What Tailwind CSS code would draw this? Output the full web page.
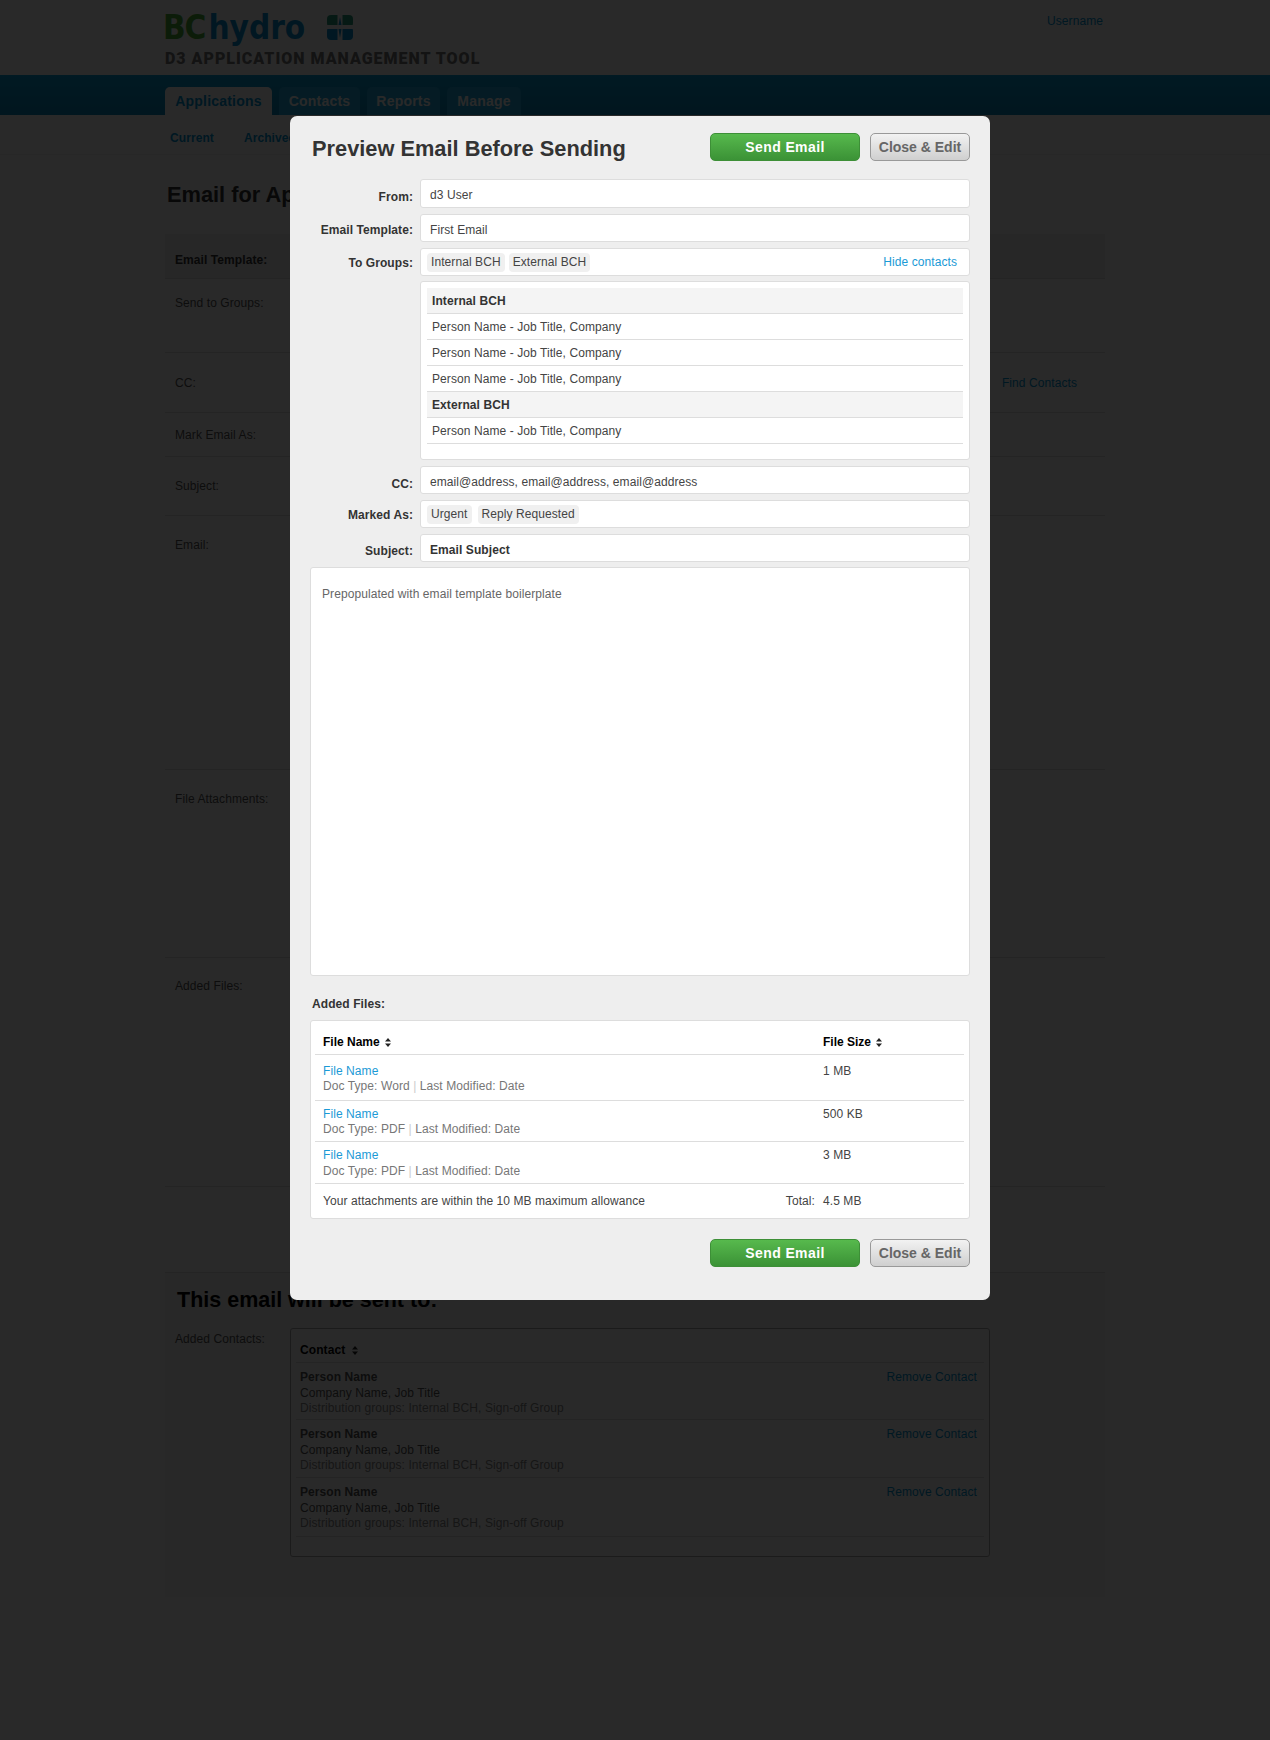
<!DOCTYPE html>
<html lang="en">
<head>
    <meta charset="UTF-8">
    <title>Preview Email Before Sending</title>
    <script src="https://cdn.jsdelivr.net/npm/@tailwindcss/browser@4"></script>
</head>
<body class="bg-white font-['Liberation_Sans',Arial,sans-serif] text-[12px] tracking-[0.08px] text-[#444]">
<div class="relative w-[1270px] h-[1740px] overflow-hidden bg-white">

    <!-- page under the dialog -->
    <header class="h-[75px] bg-[#fff]">
        <div class="w-[940px] mx-auto flex justify-between relative">
            <div>
                <div class="flex items-center h-[46px] pt-[8px] -ml-[2px]">
                    <span class="font-['DejaVu_Sans',sans-serif] font-stretch-condensed font-bold text-[33px] leading-none tracking-[-1px] text-[#4caf3a]">BC</span>
                    <span class="ml-[3px] font-['DejaVu_Sans',sans-serif] font-stretch-condensed font-bold text-[33px] leading-none tracking-normal text-[#0a8fd0]">hydro</span>
                    <svg class="ml-[22px]" width="26" height="25" viewBox="0 0 26 25"><rect width="26" height="12" rx="4" fill="#2a9a7a"/><rect y="12" width="26" height="13" rx="4" fill="#0a8fd0"/><path d="M10.500 0h5v10H26v4H15.500v11h-5V14H0v-4h10.500z" fill="#fff"/><path d="M13 2l-1.500 8h3zM13 23l-1.500-9h3z" fill="#0a8fd0"/></svg>
                </div>
                <div class="mt-[3px] font-['Roboto',sans-serif] font-black text-[16px] leading-[20px] tracking-[1px] text-[#777]">D3 APPLICATION MANAGEMENT TOOL</div>
            </div>
            <a class="pt-[12px] pr-[2px] text-[#0095d5]">Username</a>
        </div>
    </header>
    <nav class="h-[40px] bg-gradient-to-b from-[#0b9fd8] to-[#0a88bc]">
        <div class="w-[940px] mx-auto flex gap-[7px] pt-[12px] h-full font-bold text-[14px] tracking-[0.2px]">
            <a class="flex items-center w-[107px] justify-center rounded-t-[5px] bg-white text-[#0095d5]">Applications</a>
            <a class="flex items-center w-[81px] justify-center rounded-t-[5px] bg-[#1fa8dc] text-white">Contacts</a>
            <a class="flex items-center w-[73px] justify-center rounded-t-[5px] bg-[#1fa8dc] text-white">Reports</a>
            <a class="flex items-center w-[74px] justify-center rounded-t-[5px] bg-[#1fa8dc] text-white">Manage</a>
        </div>
    </nav>
    <div class="h-[40px] border-b border-[#eee]">
        <div class="w-[940px] mx-auto flex gap-[30px] pl-[5px] pt-[14px] font-bold text-[#0095d5]">
            <a>Current</a>
            <a>Archived</a>
        </div>
    </div>

    <main class="w-[940px] mx-auto text-[#555]">
        <h1 class="pt-[27px] pl-[2px] h-[79px] font-bold text-[21.800px] tracking-normal leading-[26px] text-[#333]">Email for Application</h1>
        <div class="h-[45px] pl-[10px] pt-[17px] font-bold text-[#333] bg-[#f2f2f2] border-b border-[#ddd]">Email Template:</div>
        <div class="h-[74px] pl-[10px] pt-[15px] border-b border-[#ddd]">Send to Groups:</div>
        <div class="h-[60px] pl-[10px] pt-[21px] border-b border-[#ddd] flex justify-between"><span>CC:</span><a class="mr-[28px] text-[#0095d5]">Find Contacts</a></div>
        <div class="h-[44px] pl-[10px] pt-[13px] border-b border-[#ddd]">Mark Email As:</div>
        <div class="h-[59px] pl-[10px] pt-[20px] border-b border-[#ddd]">Subject:</div>
        <div class="h-[254px] pl-[10px] pt-[20px] border-b border-[#ddd]">Email:</div>
        <div class="h-[188px] pl-[10px] pt-[20px] border-b border-[#ddd]">File Attachments:</div>
        <div class="h-[229px] pl-[10px] pt-[19px] border-b border-[#ddd]">Added Files:</div>

        <section class="mt-[85px] h-[325px] bg-[#f6f6f6] border-t border-[#ddd] relative">
            <h2 class="pt-[14px] pl-[12px] font-bold text-[21.500px] tracking-normal leading-[26px] text-black">This email will be sent to:</h2>
            <div class="flex mt-[15px]">
                <div class="w-[125px] pl-[10px] pt-[2px]">Added Contacts:</div>
                <div class="w-[700px] h-[229px] bg-white border border-[#aaa] rounded-[3px] px-[5px]">
                    <div class="h-[34px] pl-[4px] pt-[12px] border-b border-[#ddd] font-bold text-black">Contact <svg class="inline ml-[3px]" width="6" height="9" viewBox="0 0 6 9"><path d="M3 0l3 3.500H0zM3 9L0 5.500h6z" fill="#222"/></svg></div>
                    <div class="h-[57px] pl-[4px] pt-[7px] leading-[15.500px] border-b border-[#ddd] flex justify-between">
                        <div><b class="block">Person Name</b><span class="block">Company Name, Job Title</span><span class="block text-[#888]">Distribution groups: Internal BCH, Sign-off Group</span></div>
                        <a class="mr-[7px] text-[#0095d5]">Remove Contact</a>
                    </div>
                    <div class="h-[58px] pl-[4px] pt-[7px] leading-[15.500px] border-b border-[#ddd] flex justify-between">
                        <div><b class="block">Person Name</b><span class="block">Company Name, Job Title</span><span class="block text-[#888]">Distribution groups: Internal BCH, Sign-off Group</span></div>
                        <a class="mr-[7px] text-[#0095d5]">Remove Contact</a>
                    </div>
                    <div class="h-[59px] pl-[4px] pt-[7px] leading-[15.500px] border-b border-[#ddd] flex justify-between">
                        <div><b class="block">Person Name</b><span class="block">Company Name, Job Title</span><span class="block text-[#888]">Distribution groups: Internal BCH, Sign-off Group</span></div>
                        <a class="mr-[7px] text-[#0095d5]">Remove Contact</a>
                    </div>
                </div>
            </div>
        </section>
    </main>

    <!-- overlay + dialog -->
    <div class="absolute inset-0 bg-black/84"></div>
    <div class="absolute left-[290px] top-[116px] w-[700px] h-[1184px] rounded-[7px] bg-[#eee] px-[20px]">
        <div class="flex items-start h-[63px]">
            <h2 class="pl-[2px] pt-[20px] font-bold text-[21.800px] tracking-normal leading-[26px] text-[#333]">Preview Email Before Sending</h2>
            <button class="ml-auto mt-[17px] w-[150px] h-[28px] rounded-[5px] border border-[#3d8f37] bg-gradient-to-b from-[#57b94d] to-[#3b9236] font-bold text-[14px] tracking-[0.4px] text-white">Send Email</button>
            <button class="ml-[10px] mt-[17px] w-[100px] h-[28px] rounded-[5px] border border-[#999] bg-gradient-to-b from-[#f2f2f2] to-[#cfcfcf] font-bold text-[14px] tracking-normal text-[#666]">Close &amp; Edit</button>
        </div>

        <div class="flex flex-col gap-[6px]">
            <div class="flex">
                <div class="w-[110px] pr-[7px] pt-[9px] text-right font-bold text-[#333]">From:</div>
                <div class="w-[550px] h-[29px] flex items-center pl-[9px] pt-[3px] rounded-[3px] bg-white border border-[#ddd]">d3 User</div>
            </div>
            <div class="flex">
                <div class="w-[110px] pr-[7px] pt-[7px] text-right font-bold text-[#333]">Email Template:</div>
                <div class="w-[550px] h-[28px] flex items-center pl-[9px] pt-[3px] rounded-[3px] bg-white border border-[#ddd]">First Email</div>
            </div>
            <div class="flex">
                <div class="w-[110px] pr-[7px] pt-[6px] text-right font-bold text-[#333]">To Groups:</div>
                <div class="w-[550px] h-[28px] flex items-center gap-[4px] pl-[6px] pr-[12px] rounded-[3px] bg-white border border-[#ddd]">
                    <span class="h-[19px] leading-[19px] px-[4px] rounded-[4px] bg-[#f0f0f0]">Internal BCH</span>
                    <span class="h-[19px] leading-[19px] px-[4px] rounded-[4px] bg-[#f0f0f0]">External BCH</span>
                    <a class="ml-auto text-[#1b9ad6]">Hide contacts</a>
                </div>
            </div>
            <div class="ml-[110px] -mt-[1px] w-[550px] h-[179px] rounded-[3px] bg-white border border-[#ddd] px-[6px] pt-[6px]">
                <div class="h-[26px] leading-[27px] pl-[5px] bg-[#f4f4f4] border-b border-[#ddd] font-bold text-[#333]">Internal BCH</div>
                <div class="h-[26px] leading-[27px] pl-[5px] border-b border-[#ddd]">Person Name - Job Title, Company</div>
                <div class="h-[26px] leading-[27px] pl-[5px] border-b border-[#ddd]">Person Name - Job Title, Company</div>
                <div class="h-[26px] leading-[27px] pl-[5px] border-b border-[#ddd]">Person Name - Job Title, Company</div>
                <div class="h-[26px] leading-[26px] pl-[5px] bg-[#f4f4f4] border-b border-[#ddd] font-bold text-[#333]">External BCH</div>
                <div class="h-[26px] leading-[27px] pl-[5px] border-b border-[#ddd]">Person Name - Job Title, Company</div>
            </div>
            <div class="flex">
                <div class="w-[110px] pr-[7px] pt-[9px] text-right font-bold text-[#333]">CC:</div>
                <div class="w-[550px] h-[28px] flex items-center pl-[9px] pt-[3px] rounded-[3px] bg-white border border-[#ddd]">email@address, email@address, email@address</div>
            </div>
            <div class="flex">
                <div class="w-[110px] pr-[7px] pt-[6px] text-right font-bold text-[#333]">Marked As:</div>
                <div class="w-[550px] h-[28px] flex items-center gap-[6px] pl-[6px] rounded-[3px] bg-white border border-[#ddd]">
                    <span class="h-[19px] leading-[19px] px-[4px] rounded-[4px] bg-[#f0f0f0]">Urgent</span>
                    <span class="h-[19px] leading-[19px] px-[4px] rounded-[4px] bg-[#f0f0f0]">Reply Requested</span>
                </div>
            </div>
            <div class="flex">
                <div class="w-[110px] pr-[7px] pt-[8px] text-right font-bold text-[#333]">Subject:</div>
                <div class="w-[550px] h-[28px] flex items-center pl-[9px] pt-[3px] rounded-[3px] bg-white border border-[#ddd] font-bold text-[#333]">Email Subject</div>
            </div>
            <div class="-mt-[1px] w-[660px] h-[409px] rounded-[3px] bg-white border border-[#ddd] pl-[11px] pt-[17px] text-[#666]">Prepopulated with email template boilerplate</div>
        </div>

        <div class="h-[44px] pl-[2px] pt-[19px] font-bold text-[#333]">Added Files:</div>

        <div class="w-[660px] h-[199px] rounded-[3px] bg-white border border-[#ddd] pl-[4px] pr-[5px]">
            <div class="grid grid-cols-[500px_1fr] h-[34px] pl-[8px] pt-[12px] border-b border-[#ddd] font-bold tracking-normal text-black">
                <div>File Name <svg class="inline ml-[2px]" width="6" height="9" viewBox="0 0 6 9"><path d="M3 0l3 3.500H0zM3 9L0 5.500h6z" fill="#222"/></svg></div>
                <div>File Size <svg class="inline ml-[2px]" width="6" height="9" viewBox="0 0 6 9"><path d="M3 0l3 3.500H0zM3 9L0 5.500h6z" fill="#222"/></svg></div>
            </div>
            <div class="grid grid-cols-[500px_1fr] h-[46px] pl-[8px] pt-[9px] leading-[15px] border-b border-[#ddd]">
                <div><a class="block text-[#1b9ad6]">File Name</a><span class="block text-[#777]">Doc Type: Word <span class="text-[#ccc]">|</span> Last Modified: Date</span></div>
                <div>1 MB</div>
            </div>
            <div class="grid grid-cols-[500px_1fr] h-[41px] pl-[8px] pt-[6px] leading-[15px] border-b border-[#ddd]">
                <div><a class="block text-[#1b9ad6]">File Name</a><span class="block text-[#777]">Doc Type: PDF <span class="text-[#ccc]">|</span> Last Modified: Date</span></div>
                <div>500 KB</div>
            </div>
            <div class="grid grid-cols-[500px_1fr] h-[42px] pl-[8px] pt-[6px] leading-[15.500px] border-b border-[#ddd]">
                <div><a class="block text-[#1b9ad6]">File Name</a><span class="block text-[#777]">Doc Type: PDF <span class="text-[#ccc]">|</span> Last Modified: Date</span></div>
                <div>3 MB</div>
            </div>
            <div class="grid grid-cols-[500px_1fr] h-[33px] pl-[8px] pt-[8px]">
                <div class="flex justify-between pr-[8px]"><span>Your attachments are within the 10 MB maximum allowance</span><span>Total:</span></div>
                <div>4.5 MB</div>
            </div>
        </div>

        <div class="flex justify-end mt-[20px]">
            <button class="w-[150px] h-[28px] rounded-[5px] border border-[#3d8f37] bg-gradient-to-b from-[#57b94d] to-[#3b9236] font-bold text-[14px] tracking-[0.4px] text-white">Send Email</button>
            <button class="ml-[10px] w-[100px] h-[28px] rounded-[5px] border border-[#999] bg-gradient-to-b from-[#f2f2f2] to-[#cfcfcf] font-bold text-[14px] tracking-normal text-[#666]">Close &amp; Edit</button>
        </div>
    </div>
</div>
</body>
</html>
